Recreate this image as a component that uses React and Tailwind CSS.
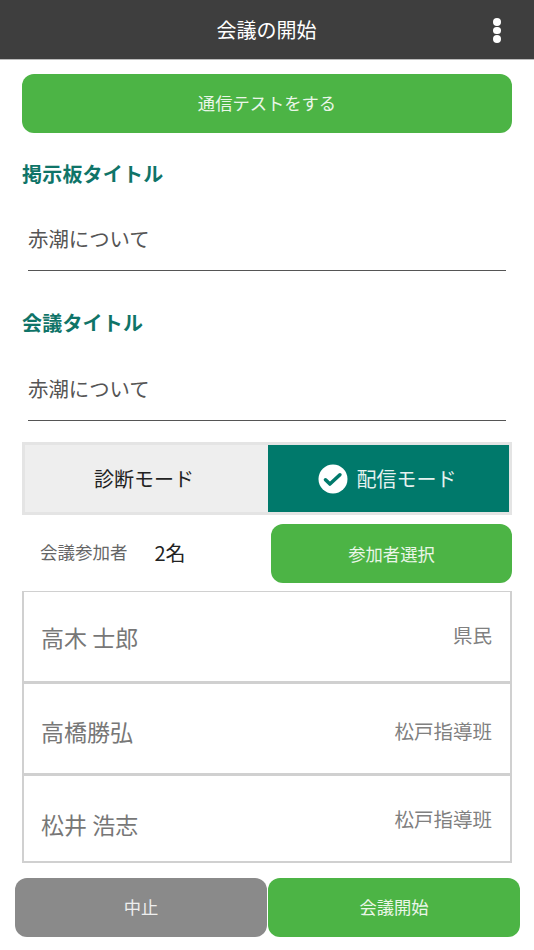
function Field({ label, value, mt, h, lead }) {
  return (
    <div className={mt}>
      <div className="ml-[22px] h-[28px] text-[20px] leading-[28px] tracking-[0.2px] font-bold text-[#0f7468]">{label}</div>
      <div className={`mx-[28px] mt-[10px] border-b border-[#555] text-[20.4px] text-[#555] ${h} ${lead}`}>{value}</div>
    </div>
  );
}

function Person({ name, group, h, nameTop, groupTop, border }) {
  return (
    <div className={`flex justify-between pl-[17px] pr-[18px] ${h} ${border}`}>
      <span className={`text-[23px] leading-[30px] text-[#777] ${nameTop}`}>{name}</span>
      <span className={`text-[19.5px] leading-[28px] text-[#808080] ${groupTop}`}>{group}</span>
    </div>
  );
}

export default function App() {
  return (
    <div className="relative h-[950px] w-[534px] overflow-hidden bg-white font-['Noto_Sans_CJK_JP','Noto_Sans',sans-serif]">
      <header className="flex h-[60px] items-center justify-center border-b border-[#bbb] bg-[#3e3e3e]">
        <span className="-translate-x-[0.5px] text-[20px] text-white">会議の開始</span>
        <div className="absolute left-[493px] top-[18px] flex w-[8px] flex-col gap-[1px]">
          <span className="h-[7.5px] w-[7.5px] rounded-full bg-white" />
          <span className="h-[7.5px] w-[7.5px] rounded-full bg-white" />
          <span className="h-[7.5px] w-[7.5px] rounded-full bg-white" />
        </div>
      </header>

      <button className="mx-[22px] mt-[14px] block h-[59px] w-[490px] rounded-[12px] bg-[#4cb445] pb-[1px] text-[17.3px] text-[#eaf6e8]">通信テストをする</button>

      <Field label="掲示板タイトル" value="赤潮について" mt="mt-[27px]" h="h-[73px]" lead="leading-[80px]" />
      <Field label="会議タイトル" value="赤潮について" mt="mt-[38px]" h="h-[74px]" lead="leading-[82px]" />

      <div className="mx-[22px] mt-[21px] flex h-[73px] w-[490px] border-[3px] border-[#e4e4e4] bg-[#eeeeee]">
        <div className="flex w-[243px] items-center justify-center pr-[5px] text-[20px] text-[#222]">診断モード</div>
        <div className="flex flex-1 items-center justify-center gap-[9px] pr-[3px] bg-[#00796b] text-[20px] text-[#e6f2f0]">
          <svg width="30" height="30" viewBox="0 0 30 30">
            <circle cx="15" cy="15" r="14.5" fill="#fff" />
            <path d="M7.5 15.8l4.4 4.2 10-9.2" fill="none" stroke="#00796b" strokeWidth="3.6" strokeLinecap="round" strokeLinejoin="round" />
          </svg>
          <span>配信モード</span>
        </div>
      </div>

      <div className="mt-[9px] flex h-[60px] items-start pl-[40px] pr-[22px]">
        <span className="mt-[15px] text-[17.5px] text-[#666]">会議参加者</span>
        <span className="ml-[27px] mt-[14px] text-[20px] text-[#222]">2名</span>
        <button className="ml-auto h-[59px] w-[241px] rounded-[12px] bg-[#4cb445] text-[17.3px] text-[#eaf6e8]">参加者選択</button>
      </div>

      <div className="mx-[22px] mt-[7px] h-[272px] w-[490px] border-2 border-t border-[#d0d0d0] border-b-2">
        <Person name="高木 士郎" group="県民" h="h-[92px]" nameTop="mt-[30px]" groupTop="mt-[29px]" border="border-b-[3px] border-[#d0d0d0]" />
        <Person name="高橋勝弘" group="松戸指導班" h="h-[92px]" nameTop="mt-[32px]" groupTop="mt-[33px]" border="border-b-[3px] border-[#d0d0d0]" />
        <Person name="松井 浩志" group="松戸指導班" h="h-[85px]" nameTop="mt-[33px]" groupTop="mt-[29px]" border="" />
      </div>

      <div className="mt-[15px] flex gap-[1px] pl-[15px]">
        <button className="h-[59px] w-[252px] rounded-[12px] bg-[#8a8a8a] pb-[2px] text-[17.3px] text-[#eee]">中止</button>
        <button className="h-[59px] w-[252px] rounded-[12px] bg-[#4cb445] pb-[2px] text-[17.3px] text-[#eaf6e8]">会議開始</button>
      </div>
    </div>
  );
}
